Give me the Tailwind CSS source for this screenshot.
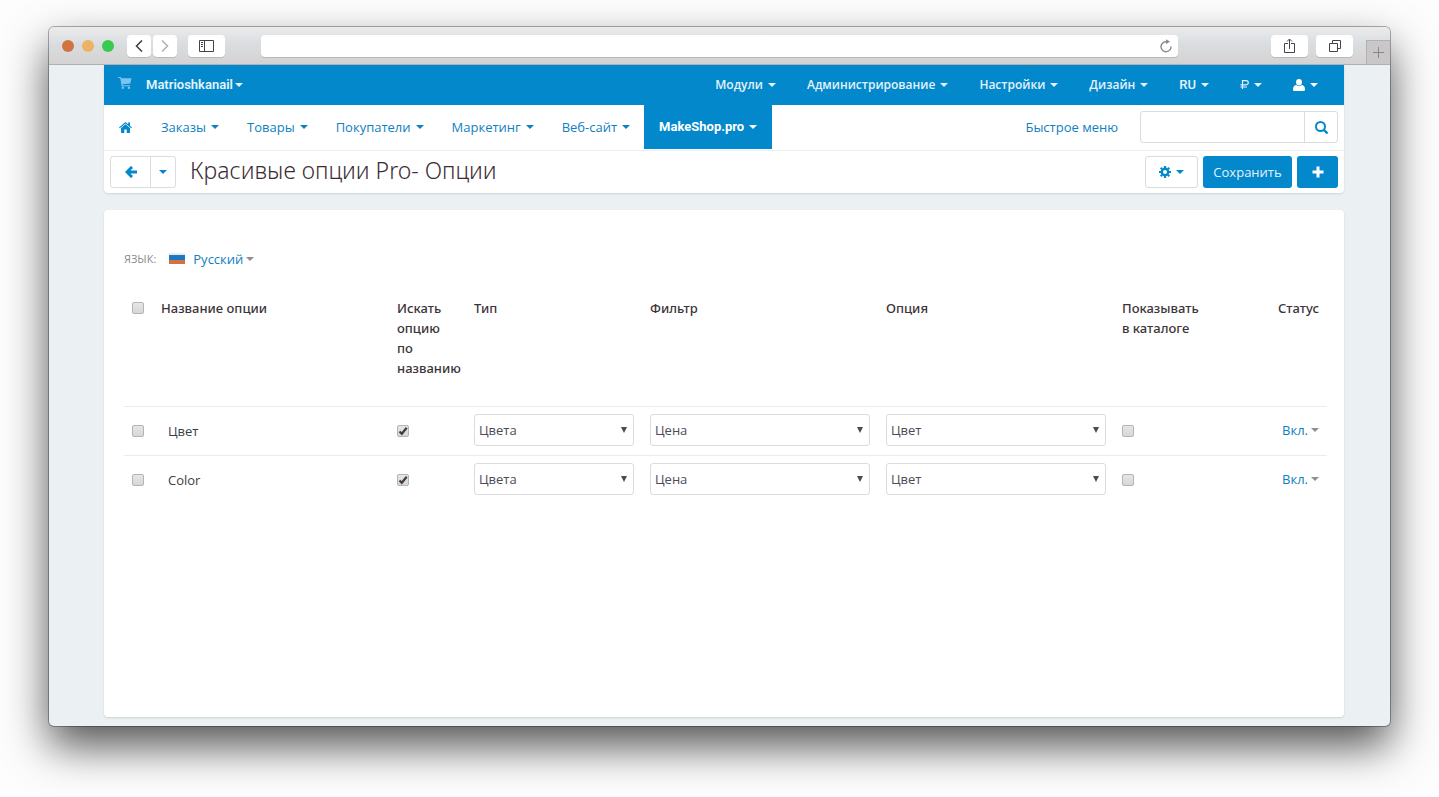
<!DOCTYPE html>
<html lang="ru">
<head>
    <meta charset="UTF-8">
    <meta name="viewport" content="width=device-width, initial-scale=1.0">
    <title>Красивые опции Pro - Опции</title>
    <script src="https://cdn.jsdelivr.net/npm/@tailwindcss/browser@4"></script>
</head>
<body class="bg-[#fdfdfd] font-['Open_Sans','Noto_Sans',sans-serif] text-[13px] leading-5 text-[#3d3d46]">

    <!-- Shared symbols -->
    <svg class="hidden" aria-hidden="true">
        <symbol id="caret" viewBox="0 0 8 4"><path d="M0 0h8L4 4z" fill="currentColor"/></symbol>
        <symbol id="arrow" viewBox="0 0 6 6"><path d="M0 0h6L3 6z" fill="currentColor"/></symbol>
    </svg>

    <div class="flex min-h-screen flex-col px-[49px] pt-[27px] pb-[71px]">
        <div class="flex flex-1 flex-col rounded-[5px] bg-[#ebf0f2] shadow-[0_0_0_1px_rgba(0,0,0,0.3),0_20px_44px_rgba(0,0,0,0.68)]">

            <!-- Browser toolbar -->
            <div class="flex h-[38px] items-center rounded-t-[5px] border-b border-[#b0b0b0] bg-linear-to-b from-[#eaebec] via-[#d9dcdf] to-[#d5d2d3] pl-[13px]">
                <div class="flex gap-2">
                    <span class="size-3 rounded-full bg-[#d27441]"></span>
                    <span class="size-3 rounded-full bg-[#ecb365]"></span>
                    <span class="size-3 rounded-full bg-[#38c950]"></span>
                </div>
                <button aria-label="Назад" class="ml-[13px] flex h-[22px] w-6 items-center justify-center rounded bg-white shadow-[0_1px_0_#b9b9b9]">
                    <svg class="h-3 w-2" viewBox="0 0 8 12" fill="none" stroke="#45424d" stroke-width="1.600"><path d="M7 .5 1.500 6 7 11.500"/></svg>
                </button>
                <button aria-label="Вперёд" class="ml-[2px] flex h-[22px] w-6 items-center justify-center rounded bg-white shadow-[0_1px_0_#b9b9b9]">
                    <svg class="h-3 w-2" viewBox="0 0 8 12" fill="none" stroke="#b5b2b5" stroke-width="1.600"><path d="M1 .5 6.500 6 1 11.500"/></svg>
                </button>
                <button aria-label="Боковая панель" class="ml-[11px] flex h-[22px] w-[37px] items-center justify-center rounded bg-white shadow-[0_1px_0_#b9b9b9]">
                    <svg class="h-3 w-[15px]" viewBox="0 0 15 12" fill="none" stroke="#45424d"><path d="M.5.5h14v11H.5zM5.500.5v11M2 2.500h2M2 4.500h2M2 6.500h2"/></svg>
                </button>
                <div class="ml-9 flex h-[22px] flex-1 items-center rounded bg-white pr-[6px] shadow-[0_1px_0_#b9b9b9]">
                    <input aria-label="Адрес" class="min-w-0 flex-1 px-2 outline-none">
                    <button aria-label="Обновить">
                        <svg class="h-[14px] w-3" viewBox="0 0 12 14" fill="none" stroke="#8f868c" stroke-width="1.400"><path d="M11 7.500A5 5 0 1 1 6 2.700h2"/><path d="M6 .3 10 2.700 6 5z" fill="#8f868c" stroke="none"/></svg>
                    </button>
                </div>
                <button aria-label="Поделиться" class="ml-[93px] flex h-[22px] w-[37px] items-center justify-center rounded bg-white shadow-[0_1px_0_#b9b9b9]">
                    <svg class="h-4 w-[11px]" viewBox="0 0 11 16" fill="none" stroke="#45424d"><path d="M4 5.500H.5v9h10v-9H7M5.500 11V1.500M3 3.500 5.500 1 8 3.500"/></svg>
                </button>
                <button aria-label="Вкладки" class="ml-2 flex h-[22px] w-[37px] items-center justify-center rounded bg-white shadow-[0_1px_0_#b9b9b9]">
                    <svg class="size-3" viewBox="0 0 12 12" fill="none" stroke="#45424d"><path d="M.5 3.500h8v8h-8zM3.500 3.500v-3h8v8h-3"/></svg>
                </button>
                <button aria-label="Новая вкладка" class="ml-[13px] flex h-6 w-6 items-center justify-center self-end border-t border-l border-[#b3b0b2] bg-[#cac7c9]">
                    <svg class="size-[11px]" viewBox="0 0 11 11" stroke="#8c8489"><path d="M5.500 0v11M0 5.500h11"/></svg>
                </button>
            </div>

            <div class="flex flex-1 flex-col pr-[46px] pb-[9px] pl-[55px]">
                <header class="rounded-b bg-white shadow-[0_1px_2px_#cfd4d7]">

                    <!-- Top bar -->
                    <div class="flex h-10 items-center bg-[#0388cc] pr-[26px] pb-px pl-[14px] text-[#e3f2fa]">
                        <a href="#" aria-label="Магазин" class="mb-1">
                            <svg class="h-3 w-[14px]" viewBox="0 0 14 12" fill="#7cc4ef"><path d="M0 0h3l.4 1.300H13.500l-1.200 5.200-7.800.8.200 1h7.300v1H3.700L2.200 1H0z"/><circle cx="4.800" cy="10.700" r="1.200"/><circle cx="11" cy="10.700" r="1.200"/></svg>
                        </a>
                        <a href="#" class="ml-[14px] flex items-center font-[Roboto,sans-serif] font-semibold">Matrioshkanail<svg class="ml-[2px] h-1 w-2"><use href="#caret"/></svg></a>
                        <nav class="ml-auto flex gap-[31px] text-[12px] font-semibold">
                            <a href="#" class="flex items-center gap-[5px]">Модули <svg class="h-1 w-2"><use href="#caret"/></svg></a>
                            <a href="#" class="flex items-center gap-[5px]">Администрирование <svg class="h-1 w-2"><use href="#caret"/></svg></a>
                            <a href="#" class="flex items-center gap-[5px]">Настройки <svg class="h-1 w-2"><use href="#caret"/></svg></a>
                            <a href="#" class="flex items-center gap-[5px]">Дизайн <svg class="h-1 w-2"><use href="#caret"/></svg></a>
                            <a href="#" class="flex items-center gap-[5px] font-[Roboto,sans-serif] text-[13px] font-medium">RU <svg class="h-1 w-2"><use href="#caret"/></svg></a>
                            <a href="#" class="flex items-center gap-[5px]" aria-label="Валюта"><svg class="h-[9px] w-[9px]" viewBox="0 0 9 9" fill="none" stroke="currentColor" stroke-width="1.200"><path d="M2.500 9V.6h3.700a2.100 2.100 0 0 1 0 4.200H.5M.5 7h6.500"/></svg> <svg class="h-1 w-2"><use href="#caret"/></svg></a>
                            <a href="#" class="flex items-center gap-[5px] text-white" aria-label="Профиль"><svg class="size-3" viewBox="0 0 12 12" fill="currentColor"><ellipse cx="6" cy="3.300" rx="2.900" ry="3.300"/><path d="M3 6c2 1.500 4 1.500 6 0 2 .3 3 2 3 4.500 0 1-.7 1.500-1.500 1.500h-9C.7 12 0 11.500 0 10.500 0 8 1 6.300 3 6z"/></svg> <svg class="h-1 w-2"><use href="#caret"/></svg></a>
                        </nav>
                    </div>

                    <!-- Main menu -->
                    <div class="flex h-[46px] border-b border-[#edeff0] pr-[6px] font-medium text-[#0f80c0]">
                        <nav class="flex h-11">
                            <a href="#" aria-label="Главная" class="flex items-center px-[15px]">
                                <svg class="h-[11px] w-[13px]" viewBox="0 0 13 11" fill="#0388cc"><path d="M6.500 2.200 11 6v4.300c0 .4-.3.700-.7.700H7.700V7.500H5.300V11H2.700c-.4 0-.7-.3-.7-.7V6z"/><path d="m6.500 0 2.600 2.200V.5H11v3.300l2 1.700-.7.800-5.800-4.900L.7 6.300 0 5.500z"/></svg>
                            </a>
                            <a href="#" class="flex items-center gap-[5px] px-[14px]">Заказы <svg class="h-1 w-2"><use href="#caret"/></svg></a>
                            <a href="#" class="flex items-center gap-[5px] px-[14px]">Товары <svg class="h-1 w-2"><use href="#caret"/></svg></a>
                            <a href="#" class="flex items-center gap-[5px] px-[14px]">Покупатели <svg class="h-1 w-2"><use href="#caret"/></svg></a>
                            <a href="#" class="flex items-center gap-[5px] px-[14px]">Маркетинг <svg class="h-1 w-2"><use href="#caret"/></svg></a>
                            <a href="#" class="flex items-center gap-[5px] px-[14px]">Веб-сайт <svg class="h-1 w-2"><use href="#caret"/></svg></a>
                            <a href="#" class="flex items-center gap-[5px] bg-[#0388cc] px-[15px] font-[Roboto,sans-serif] font-bold text-white">MakeShop.pro <svg class="h-1 w-2"><use href="#caret"/></svg></a>
                        </nav>
                        <a href="#" class="mr-[22px] ml-auto flex h-11 items-center font-normal">Быстрое меню</a>
                        <form class="mt-[6px] flex h-8 w-[198px] rounded-[3px] border border-[#dadcde]">
                            <input type="text" aria-label="Поиск" class="min-w-0 flex-1 px-2 outline-none">
                            <button type="button" aria-label="Найти" class="flex w-[33px] items-center justify-center border-l border-[#dadcde]">
                                <svg class="size-[13px]" viewBox="0 0 13 13" fill="none" stroke="#0388cc"><circle cx="5.500" cy="5.500" r="4.500" stroke-width="2"/><path d="m9 9 3.500 3.500" stroke-width="2.400"/></svg>
                            </button>
                        </form>
                    </div>

                    <!-- Page title and actions -->
                    <div class="flex h-[42px] items-center px-[6px] text-[#0388cc]">
                        <div class="flex h-8 rounded-[3px] border border-[#dadcde]">
                            <button aria-label="Вернуться" class="flex w-[39px] items-center justify-center">
                                <svg class="h-3 w-3" viewBox="0 0 12 12" fill="none" stroke="currentColor" stroke-width="2.800"><path d="M12 6H2M7 .9 1.900 6 7 11.100"/></svg>
                            </button>
                            <button aria-label="Ещё" class="flex w-[25px] items-center justify-center border-l border-[#dadcde]"><svg class="h-1 w-2"><use href="#caret"/></svg></button>
                        </div>
                        <h1 class="ml-[14px] pb-1 font-['Noto_Sans',sans-serif] text-[23px] leading-8 font-light text-[#3a2e34]">Красивые опции Pro- Опции</h1>
                        <div class="ml-auto flex gap-[5px]">
                            <button aria-label="Настройки" class="flex h-8 w-[53px] items-center justify-center gap-[5px] rounded-[3px] border border-[#dadcde]">
                                <svg class="size-3" viewBox="0 0 12 12" fill="none" stroke="currentColor"><circle cx="6" cy="6" r="3.200" stroke-width="2.400"/><path d="M6 0v2M6 10v2M0 6h2M10 6h2M1.760 1.760l1.400 1.400M8.840 8.840l1.400 1.400M1.760 10.240l1.400-1.400M8.840 3.160l1.400-1.400" stroke-width="2.200"/></svg>
                                <svg class="h-1 w-2"><use href="#caret"/></svg>
                            </button>
                            <button class="h-8 w-[89px] rounded-[3px] bg-[#0388cc] text-center text-[#e3f2fa]">Сохранить</button>
                            <button aria-label="Добавить" class="flex h-8 w-[41px] items-center justify-center rounded-[3px] bg-[#0388cc]">
                                <svg class="size-3" viewBox="0 0 12 12" stroke="#fff" stroke-width="3"><path d="M6 .5v11M.5 6h11"/></svg>
                            </button>
                        </div>
                    </div>
                </header>

                <!-- Options -->
                <main class="mt-[17px] flex-1 rounded bg-white pt-[39px] pr-[17px] pl-5 shadow-[0_1px_2px_#cfd4d7]">
                    <div class="flex items-center">
                        <span class="text-[11px] text-[#8b8b8d]">ЯЗЫК:</span>
                        <svg class="mb-[2px] ml-[13px] h-[11px] w-4" viewBox="0 0 16 11"><path fill="#e9ebf0" d="M0 0h16v3H0z"/><path fill="#1e76c4" d="M0 2h16v5H0z"/><path fill="#d27441" d="M0 7h16v4H0z"/></svg>
                        <button class="ml-2 flex items-center gap-[3px] text-[#0f80c0]">Русский <svg class="h-1 w-2 text-[#948c90]"><use href="#caret"/></svg></button>
                    </div>

                    <table class="mt-[21px] w-full table-fixed text-left">
                        <colgroup>
                            <col class="w-[29px]">
                            <col class="w-[236px]">
                            <col class="w-[77px]">
                            <col class="w-[176px]">
                            <col class="w-[236px]">
                            <col class="w-[236px]">
                            <col class="w-[107px]">
                            <col class="w-[106px]">
                        </colgroup>
                        <thead>
                            <tr class="align-top font-['Noto_Sans',sans-serif] text-[#3d3439]">
                                <th class="pt-3 pl-2"><input type="checkbox" aria-label="Выбрать все" class="block size-3 appearance-none rounded-[2px] border border-[#b4b4b6] bg-linear-to-b from-[#e6e6e7] to-[#d6d7d8]"></th>
                                <th class="px-2 pt-2 pb-7 font-medium">Название опции</th>
                                <th class="px-2 pt-2 pb-7 font-medium">Искать опцию по названию</th>
                                <th class="px-2 pt-2 pb-7 font-medium">Тип</th>
                                <th class="px-2 pt-2 pb-7 font-medium">Фильтр</th>
                                <th class="px-2 pt-2 pb-7 font-medium">Опция</th>
                                <th class="px-2 pt-2 pb-7 font-medium">Показывать<br>в каталоге</th>
                                <th class="px-2 pt-2 pb-7 text-right font-medium">Статус</th>
                            </tr>
                        </thead>
                        <tbody id="rows"></tbody>
                    </table>
                </main>
            </div>
        </div>
    </div>

    <script>
        const box = 'block size-3 appearance-none rounded-[2px] border border-[#b4b4b6] bg-linear-to-b from-[#e6e6e7] to-[#d6d7d8]';

        function select(label, value) {
            return `<td class="px-2 pb-[2px]"><div class="relative">
                <select aria-label="${label}" class="block h-8 w-full appearance-none rounded-[3px] border border-[#dadcde] bg-white px-1 text-[#4c4a58]"><option>${value}</option></select>
                <svg class="pointer-events-none absolute top-[13px] right-[7px] size-[6px] text-[#4c4a58]"><use href="#arrow"/></svg>
            </div></td>`;
        }

        document.getElementById('rows').innerHTML = ['Цвет', 'Color'].map(name => `
            <tr class="h-[49px] border-t border-[#e9ebec]">
                <td class="pl-2"><input type="checkbox" aria-label="Выбрать ${name}" class="${box}"></td>
                <td class="pl-[15px]">${name}</td>
                <td class="px-2"><div class="relative w-3">
                    <input type="checkbox" checked aria-label="Искать ${name} по названию" class="${box}">
                    <svg class="pointer-events-none absolute inset-0 size-3" viewBox="0 0 12 12" fill="none" stroke="#4a383e" stroke-width="2.200"><path d="m2.500 6.500 2.300 2.300L9.700 2.700"/></svg>
                </div></td>
                ${select('Тип', 'Цвета')}
                ${select('Фильтр', 'Цена')}
                ${select('Опция', 'Цвет')}
                <td class="px-2"><input type="checkbox" aria-label="Показывать ${name} в каталоге" class="${box}"></td>
                <td class="px-2 pb-[2px]"><button class="ml-auto flex items-center gap-[3px] text-[#0f80c0]">Вкл. <svg class="h-1 w-2 text-[#948c90]"><use href="#caret"/></svg></button></td>
            </tr>`).join('');
    </script>
</body>
</html>
